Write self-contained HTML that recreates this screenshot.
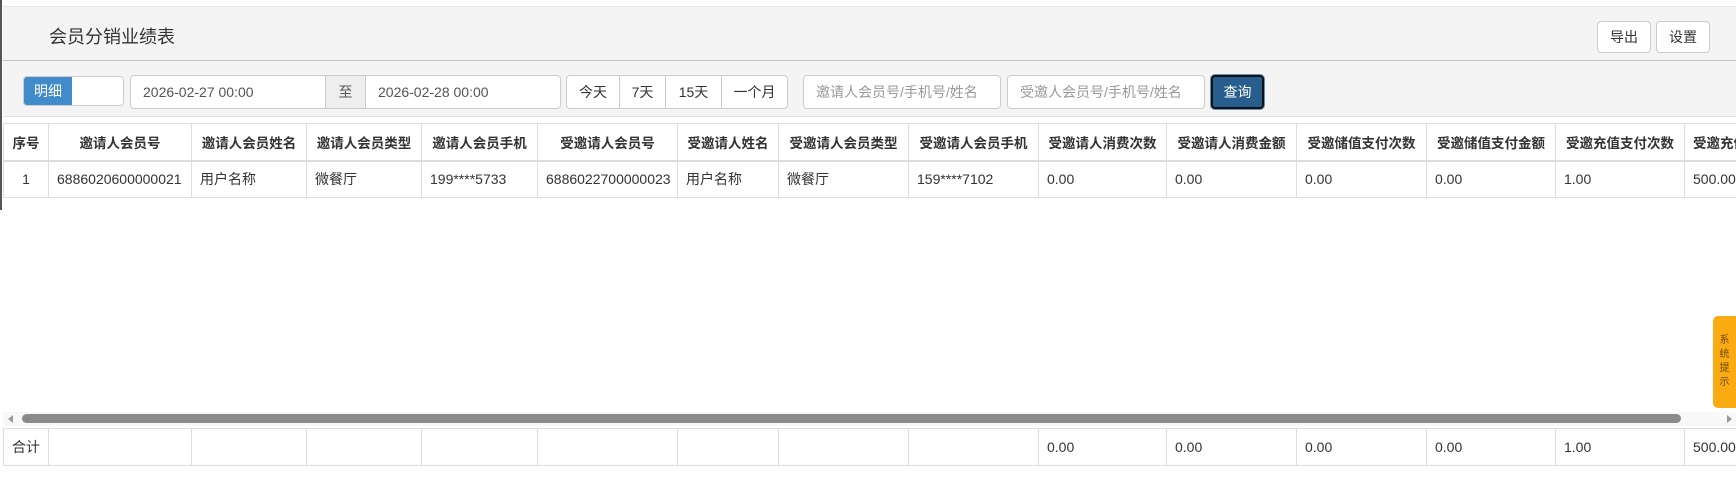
<!DOCTYPE html>
<html><head><meta charset="utf-8"><style>
*{box-sizing:border-box;margin:0;padding:0}
body{width:1736px;height:483px;overflow:hidden;background:#fff;font-family:"Liberation Sans","Noto Sans CJK SC",sans-serif;color:#333;position:relative}
.abs{position:absolute}
.edge{left:0;top:0;width:2px;height:210px;background:#555}
.head{left:3px;top:6px;width:1733px;height:55px;background:#f4f4f4;border-top:1px solid #e8e8e8;border-bottom:1px solid #c4c4c4}
.title{left:49px;top:23px;font-size:18px;color:#333}
.btn{background:#fff;border:1px solid #ccc;border-radius:4px;font-size:14px;color:#333;display:flex;align-items:center;justify-content:center}
.tool{left:3px;top:61px;width:1733px;height:56px;background:#f4f4f4;border-bottom:1px solid #e2e2e2}
.inp{background:#fff;border:1px solid #ccc;font-size:14px;color:#555;display:flex;align-items:center;padding-left:12px}
.ph{color:#999}
table{position:absolute;left:3px;top:123px;width:1840px;border-collapse:collapse;table-layout:fixed;font-size:14px}
td,th{border:1px solid #ddd;height:37px;padding:0 8px;white-space:nowrap;overflow:hidden;text-align:left}
th{font-size:13.5px;font-weight:bold;text-align:center;border-bottom:2px solid #ddd;color:#333}
</style></head><body>
<div class="abs edge"></div>
<div class="abs head"></div>
<div class="abs title">会员分销业绩表</div>
<div class="abs btn" style="left:1597px;top:21px;width:54px;height:32px">导出</div>
<div class="abs btn" style="left:1656px;top:21px;width:54px;height:32px">设置</div>
<div class="abs tool"></div>
<div class="abs" style="left:23px;top:76px;width:101px;height:30px;border:1px solid #ccc;border-radius:4px;background:#fff;overflow:hidden"><div style="width:48px;height:100%;background:#428bca;color:#fff;font-size:14px;display:flex;align-items:center;justify-content:center">明细</div></div>
<div class="abs inp" style="left:130px;top:75px;width:196px;height:34px;border-radius:4px 0 0 4px">2026-02-27 00:00</div>
<div class="abs" style="left:325px;top:75px;width:41px;height:34px;background:#eee;border:1px solid #ccc;font-size:14px;color:#555;display:flex;align-items:center;justify-content:center">至</div>
<div class="abs inp" style="left:365px;top:75px;width:196px;height:34px;border-radius:0 4px 4px 0">2026-02-28 00:00</div>
<div class="abs btn" style="left:566px;top:75px;width:54px;height:34px;border-radius:4px 0 0 4px">今天</div>
<div class="abs btn" style="left:619px;top:75px;width:47px;height:34px;border-radius:0">7天</div>
<div class="abs btn" style="left:665px;top:75px;width:57px;height:34px;border-radius:0">15天</div>
<div class="abs btn" style="left:721px;top:75px;width:67px;height:34px;border-radius:0 4px 4px 0">一个月</div>
<div class="abs inp ph" style="left:803px;top:75px;width:198px;height:34px;border-radius:4px">邀请人会员号/手机号/姓名</div>
<div class="abs inp ph" style="left:1007px;top:75px;width:198px;height:34px;border-radius:4px">受邀人会员号/手机号/姓名</div>
<div class="abs" style="left:1211px;top:75px;width:53px;height:34px;border-radius:4px;background:#285e8e;border:2px solid #111;box-shadow:0 0 0 1px #6a8fb5;color:#fff;font-size:14px;display:flex;align-items:center;justify-content:center">查询</div>
<table>
<colgroup><col style="width:45px"><col style="width:143px"><col style="width:115px"><col style="width:115px"><col style="width:116px"><col style="width:140px"><col style="width:101px"><col style="width:130px"><col style="width:130px"><col style="width:128px"><col style="width:130px"><col style="width:130px"><col style="width:129px"><col style="width:129px"><col style="width:159px"></colgroup>
<tr><th>序号</th><th>邀请人会员号</th><th>邀请人会员姓名</th><th>邀请人会员类型</th><th>邀请人会员手机</th><th>受邀请人会员号</th><th>受邀请人姓名</th><th>受邀请人会员类型</th><th>受邀请人会员手机</th><th>受邀请人消费次数</th><th>受邀请人消费金额</th><th>受邀储值支付次数</th><th>受邀储值支付金额</th><th>受邀充值支付次数</th><th style="text-align:left">受邀充值支付金额</th></tr>
<tr><td style="text-align:center">1</td><td>6886020600000021</td><td>用户名称</td><td>微餐厅</td><td>199****5733</td><td>6886022700000023</td><td>用户名称</td><td>微餐厅</td><td>159****7102</td><td>0.00</td><td>0.00</td><td>0.00</td><td>0.00</td><td>1.00</td><td>500.00</td></tr>
</table>
<div class="abs" style="left:3px;top:412px;width:1733px;height:14px;background:#f8f8f8"></div>
<div class="abs" style="left:8px;top:415px;width:0;height:0;border-top:4px solid transparent;border-bottom:4px solid transparent;border-right:5px solid #999"></div>
<div class="abs" style="left:22px;top:414px;width:1659px;height:9px;border-radius:5px;background:#8a8a8a"></div>
<div class="abs" style="left:1727px;top:415px;width:0;height:0;border-top:4px solid transparent;border-bottom:4px solid transparent;border-left:5px solid #999"></div>
<table style="top:428px">
<colgroup><col style="width:45px"><col style="width:143px"><col style="width:115px"><col style="width:115px"><col style="width:116px"><col style="width:140px"><col style="width:101px"><col style="width:130px"><col style="width:130px"><col style="width:128px"><col style="width:130px"><col style="width:130px"><col style="width:129px"><col style="width:129px"><col style="width:159px"></colgroup>
<tr><td>合计</td><td></td><td></td><td></td><td></td><td></td><td></td><td></td><td></td><td>0.00</td><td>0.00</td><td>0.00</td><td>0.00</td><td>1.00</td><td>500.00</td></tr>
</table>
<div class="abs" style="left:1713px;top:316px;width:23px;height:92px;background:#fbab12;border-radius:5px 0 0 5px;font-size:10px;color:#6b4a00;display:flex;flex-direction:column;align-items:center;justify-content:center;line-height:14px">系<br>统<br>提<br>示</div>
</body></html>
